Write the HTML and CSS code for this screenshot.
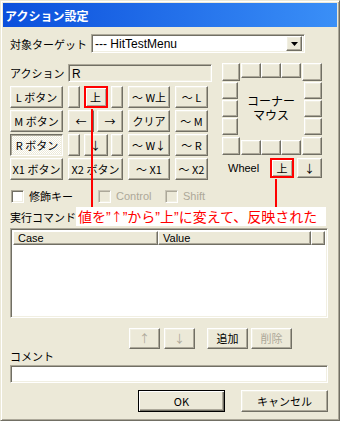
FILE: index.html
```html
<!DOCTYPE html>
<html lang="ja">
<head>
    <meta charset="UTF-8">
    <title>アクション設定</title>
    <link rel="stylesheet" href="styles.css">
</head>
<body>

    <div class="window">
        <div class="titlebar">アクション設定</div>

        <div class="client">
            <!-- 対象ターゲット -->
            <div class="target-row">
                <span class="label">対象ターゲット</span>
                <div class="combo sunken">
                    <span class="combo-text">--- HitTestMenu</span>
                    <span class="combo-btn btn">
                        <svg width="7" height="4" viewBox="0 0 7 4"><path d="M0 0h7L3.5 4z" fill="#000"/></svg>
                    </span>
                </div>
            </div>

            <div class="main">
                <div class="left">
                    <div class="action-row">
                        <span class="label">アクション</span>
                        <div class="field sunken readonly">R</div>
                    </div>

                    <!-- ボタン群 -->
                    <div class="pad">
                        <button class="btn">L ボタン</button>
                        <div class="arrows">
                            <button class="btn narrow"></button>
                            <button class="btn hl">上</button>
                            <button class="btn narrow"></button>
                        </div>
                        <button class="btn">～ W上</button>
                        <button class="btn">～ L</button>

                        <button class="btn">M ボタン</button>
                        <div class="arrows pair">
                            <button class="btn">←</button>
                            <button class="btn">→</button>
                        </div>
                        <button class="btn">クリア</button>
                        <button class="btn">～ M</button>

                        <button class="btn pressed">R ボタン</button>
                        <div class="arrows">
                            <button class="btn narrow"></button>
                            <button class="btn">↓</button>
                            <button class="btn narrow"></button>
                        </div>
                        <button class="btn">～ W↓</button>
                        <button class="btn">～ R</button>

                        <button class="btn">X1 ボタン</button>
                        <button class="btn">X2 ボタン</button>
                        <button class="btn">～ X1</button>
                        <button class="btn">～ X2</button>
                    </div>
                </div>

                <div class="right">
                    <!-- コーナーマウス -->
                    <div class="corner">
                        <button class="btn c-corner c-tl"></button>
                        <button class="btn c-top"></button>
                        <button class="btn c-top"></button>
                        <button class="btn c-top"></button>
                        <button class="btn c-corner c-tr"></button>

                        <button class="btn c-left r2"></button>
                        <div class="corner-center">コーナー<br>マウス</div>
                        <button class="btn c-right r2"></button>
                        <button class="btn c-left r3"></button>
                        <button class="btn c-right r3"></button>
                        <button class="btn c-left r4"></button>
                        <button class="btn c-right r4"></button>

                        <button class="btn c-corner c-bl"></button>
                        <button class="btn c-bottom b2"></button>
                        <button class="btn c-bottom b3"></button>
                        <button class="btn c-bottom b4"></button>
                        <button class="btn c-corner c-br"></button>
                    </div>

                    <div class="wheel">
                        <span class="wheel-label">Wheel</span>
                        <button class="btn hl">上</button>
                        <button class="btn">↓</button>
                    </div>
                </div>
            </div>

            <div class="checks">
                <div class="check"><span class="box"></span><span>修飾キー</span></div>
                <div class="check disabled"><span class="box"></span><span>Control</span></div>
                <div class="check disabled"><span class="box"></span><span>Shift</span></div>
            </div>

            <div class="caption">実行コマンド</div>
            <div class="listview sunken">
                <div class="lv-head">
                    <span class="lv-col col-case">Case</span>
                    <span class="lv-col col-value">Value</span>
                    <span class="lv-col col-rest"></span>
                </div>
            </div>

            <div class="cmd-row">
                <button class="btn small" disabled>↑</button>
                <button class="btn small" disabled>↓</button>
                <button class="btn mid add">追加</button>
                <button class="btn mid" disabled>削除</button>
            </div>

            <div class="caption caption-comment">コメント</div>
            <div class="field sunken comment"></div>

            <div class="footer">
                <button class="btn wide default">OK</button>
                <button class="btn wide">キャンセル</button>
            </div>
        </div>

        <!-- 注釈 -->
        <div class="note">値を”<span class="arrow">↑</span>”から”上”に変えて、反映された</div>
        <div class="leader leader-a"></div>
        <div class="leader leader-b"></div>
    </div>

</body>
</html>
```

FILE: styles.css
```css
/* 基本 */
* {
    box-sizing: border-box;
}
body {
    margin: 0;
    font-family: "Liberation Sans", "Noto Sans CJK JP", sans-serif;
    font-size: 11px;
    color: #000;
    background: #ece9d8;
}
button {
    font: inherit;
    color: inherit;
    margin: 0;
    padding: 0;
}

/* ウィンドウ */
.window {
    position: relative;
    width: 340px;
    height: 421px;
    padding: 2px;
    background: #ece9d8;
    border: 1px solid;
    border-color: #ece9d8 #716f64 #716f64 #ece9d8;
    box-shadow: inset 1px 1px #fff, inset -1px -1px #aca899;
    display: flex;
    flex-direction: column;
}
.titlebar {
    height: 24px;
    padding-left: 2px;
    display: flex;
    align-items: center;
    background: linear-gradient(90deg, #0b4fdc, #3a8ff7);
    color: #fff;
    font-weight: bold;
    font-size: 12px;
    font-family: "Noto Sans CJK JP", sans-serif;
}
.client {
    flex: 1;
    padding: 7px 9px 6px 7px;
    display: flex;
    flex-direction: column;
}

/* 立体枠 */
.btn {
    font-family: "Noto Sans CJK JP", "Liberation Sans", sans-serif;
    background: #ece9d8;
    border: 1px solid;
    border-color: #fff #716f64 #716f64 #fff;
    box-shadow: inset -1px -1px #aca899, inset 1px 1px #f1efe2;
    display: flex;
    align-items: center;
    justify-content: center;
    line-height: 1;
    white-space: nowrap;
}
.btn:disabled {
    color: #aca899;
}
.btn.hl {
    border: 2px solid #f00;
    box-shadow: inset 1px 1px #fff, inset -1px -1px #aca899;
}
.btn.pressed {
    border-color: #716f64 #fff #fff #716f64;
    box-shadow: inset 1px 1px #aca899, inset -1px -1px #f1efe2;
    background-color: #ece9d8;
    background-image: conic-gradient(#fff 25%, #ece9d8 0 50%, #fff 0 75%, #ece9d8 0);
    background-size: 2px 2px;
    padding: 1px 0 0 1px;
}
.btn.default {
    border-color: #000;
    box-shadow: inset 1px 1px #fff, inset -1px -1px #716f64, inset -2px -2px #aca899;
}
.sunken {
    background: #fff;
    border: 1px solid;
    border-color: #aca899 #fff #fff #aca899;
    box-shadow: inset 1px 1px #716f64, inset -1px -1px #f1efe2;
}
.label {
    white-space: nowrap;
}

/* 対象ターゲット */
.target-row {
    height: 19px;
    display: grid;
    grid-template-columns: 81px 214px;
    align-items: center;
}
.combo {
    height: 19px;
    padding: 2px;
    display: flex;
    align-items: center;
}
.combo-text {
    flex: 1;
    padding-left: 1px;
    font-size: 12px;
}
.combo-btn {
    width: 16px;
    height: 15px;
}

/* メイン */
.main {
    margin-top: 10px;
    display: flex;
    gap: 10px;
}
.left {
    width: 202px;
    padding-top: 1px;
}
.action-row {
    height: 18px;
    display: grid;
    grid-template-columns: 58px 144px;
    align-items: center;
}
.field {
    height: 18px;
    padding: 2px 3px;
    line-height: 14px;
    font-size: 12px;
}
.field.readonly {
    background: #ece9d8;
}
.pad {
    margin-top: 4px;
    display: grid;
    grid-template-columns: 53px 55px 42px 33px;
    grid-auto-rows: 22px;
    column-gap: 5px;
    row-gap: 2px;
}
.arrows {
    display: flex;
    justify-content: space-between;
}
.arrows .btn {
    width: 24px;
}
.arrows .btn.narrow {
    width: 12px;
}
.arrows.pair .btn {
    width: 26px;
}

/* コーナーマウス */
.right {
    width: 100px;
    display: flex;
    flex-direction: column;
    gap: 3px;
}
.corner {
    height: 92px;
    display: grid;
    grid-template-columns: 19px 20px 20px 20px 21px;
    grid-template-rows: 19px 18px 18px 18px 19px;
}
.c-corner {
    width: 18px;
    height: 18px;
}
.c-tl { grid-area: 1 / 1; }
.c-tr { grid-area: 1 / 5; justify-self: end; width: 20px; }
.c-bl { grid-area: 5 / 1; align-self: end; }
.c-br { grid-area: 5 / 5; align-self: end; justify-self: end; width: 20px; }
.c-top {
    grid-row: 1;
    height: 15px;
}
.c-bottom {
    grid-row: 5;
    height: 15px;
    align-self: end;
}
.b2 { grid-column: 2; }
.b3 { grid-column: 3; }
.b4 { grid-column: 4; }
.c-left {
    grid-column: 1;
    width: 16px;
    height: 17px;
}
.c-right {
    grid-column: 5;
    width: 18px;
    height: 17px;
    justify-self: end;
}
.r2 { grid-row: 2; }
.r3 { grid-row: 3; }
.r4 { grid-row: 4; }
.corner-center {
    grid-area: 2 / 2 / 5 / 5;
    display: flex;
    align-items: center;
    justify-content: center;
    text-align: center;
    font-size: 12px;
    line-height: 14px;
}
.wheel {
    height: 20px;
    display: grid;
    grid-template-columns: 45px 24px 25px;
    column-gap: 3px;
    align-items: center;
}
.wheel .btn {
    height: 20px;
}
.wheel-label {
    padding-left: 6px;
}

/* チェック */
.checks {
    margin-top: 8px;
    height: 13px;
    padding-left: 1px;
    display: grid;
    grid-template-columns: 87px 67px auto;
    align-items: center;
}
.check {
    display: flex;
    align-items: center;
    gap: 5px;
}
.box {
    width: 13px;
    height: 13px;
    background: #fff;
    border: 1px solid;
    border-color: #aca899 #fff #fff #aca899;
    box-shadow: inset 1px 1px #716f64, inset -1px -1px #f1efe2;
}
.check.disabled {
    color: #aca899;
}
.check.disabled .box {
    background: #ece9d8;
    border-color: #c9c5b6 #fff #fff #c9c5b6;
    box-shadow: inset 1px 1px #aca899, inset -1px -1px #f1efe2;
}

/* 実行コマンド */
.caption {
    margin-top: 10px;
    height: 14px;
    line-height: 14px;
}
.listview {
    margin-top: 3px;
    height: 90px;
    padding: 2px;
}
.lv-head {
    height: 14px;
    display: flex;
}
.lv-col {
    height: 14px;
    padding-left: 4px;
    line-height: 12px;
    background: #ece9d8;
    border: 1px solid;
    border-color: #fff #716f64 #716f64 #fff;
    box-shadow: inset -1px -1px #aca899;
}
.col-case { width: 145px; }
.col-value { width: 153px; }
.col-rest { flex: 1; }

.cmd-row {
    margin-top: 10px;
    height: 21px;
    padding-left: 119px;
    display: flex;
    gap: 4px;
}
.btn.small { width: 31px; }
.btn.mid { width: 41px; }
.btn.add {
    margin-left: 8px;
    margin-right: -1px;
}

.caption-comment {
    margin-top: 1px;
}
.comment {
    margin-top: 1px;
}

.footer {
    margin-top: 7px;
    height: 22px;
    display: flex;
    justify-content: flex-end;
    gap: 16px;
}
.btn.wide { width: 87px; }

/* 注釈 */
.note {
    position: absolute;
    left: 75px;
    top: 206px;
    width: 250px;
    height: 19px;
    padding-left: 2px;
    background: #fff;
    color: #f00;
    font-size: 14px;
    line-height: 19px;
    white-space: nowrap;
}
.note .arrow {
    font-family: "Noto Sans CJK JP", sans-serif;
    font-size: 12px;
}
.leader {
    position: absolute;
    width: 2px;
    background: #f00;
}
.leader-a {
    left: 90px;
    top: 108px;
    height: 98px;
}
.leader-b {
    left: 274px;
    top: 178px;
    height: 28px;
}
```
